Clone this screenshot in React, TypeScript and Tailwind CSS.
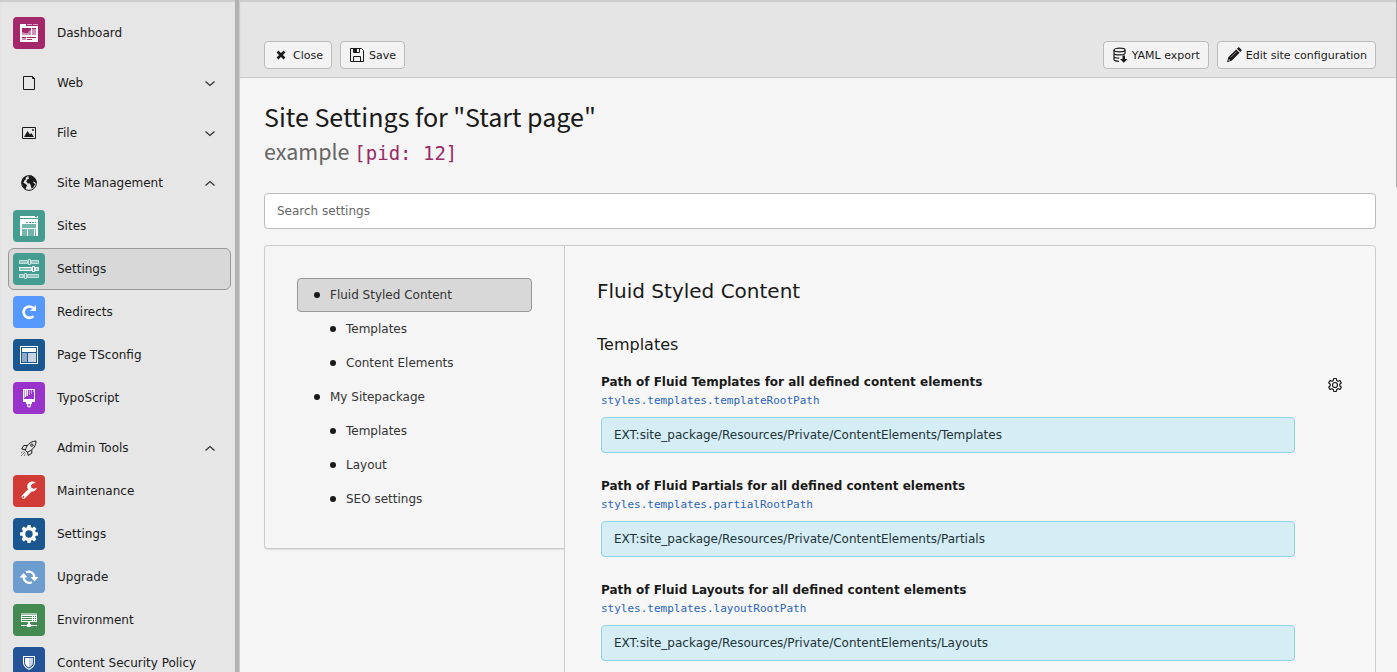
import type { ReactNode } from 'react';

const G = ({ children }: { children: ReactNode }) => (
  <svg viewBox="0 0 32 32" className="size-8" aria-hidden="true">{children}</svg>
);

const DashboardIcon = () => (
  <G>
    <path fill="#fff" d="M7 7h6v2h12v16H7z" />
    <path fill="#d9a0c2" d="M14 7h5v1h-5zM20 7h5v1h-5z" />
    <path fill="#d08fb8" d="M9 11h9v7H9zM19 11h4v7h-4zM9 20h4v3H9z" />
    <path fill="#a4276a" d="M9 11h9v2l-2 1-1 2h-3l-3-1zM19 11h4v1h-4zM9 20h4v1H9zM14 20h9v1h-9zM14 22h5v1h-5z" />
  </G>
);
const SitesIcon = () => (
  <G>
    <path fill="#fff" d="M7 6h18v2H7zM7 9h18v17H7z" />
    <path fill="#459c91" d="M22 6h2v1h-2zM9 12h14v1H9z" />
    <path fill="#fff" d="M9 12h4v1H9zM15 12h1v1h-1zM18 12h1v1h-1zM21 12h1v1h-1z" />
    <path fill="#74b5ad" d="M9 14h14v4H9zM9 19h5v7H9zM15 19h6v7h-6zM22 19h1v7h-1z" />
  </G>
);
const SlidersIcon = () => (
  <G>
    <g fill="#8fc4bd" stroke="#c7e1de">
      <path d="M6.500 7.500h8v3h-8zM18.500 7.500h7v3h-7z" />
      <path d="M6.500 21.500h4v3h-4zM14.500 21.500h11v3h-11z" />
    </g>
    <path fill="#8fc4bd" stroke="#fff" d="M6.500 14.500h12v3h-12zM22.500 14.500h3v3h-3z" />
    <g fill="#459c91" stroke="#c7e1de">
      <path d="M15.500 6.500h2v5h-2zM11.500 20.500h2v5h-2z" />
      <path stroke="#fff" d="M19.500 13.500h2v5h-2z" />
    </g>
  </G>
);
const RedirectIcon = () => (
  <G>
    <path fill="none" stroke="#fff" strokeWidth="2.600" d="M20.400 20.100a5.700 5.700 0 1 1-.4-8.300" />
    <path fill="#fff" d="M23 9v6h-6z" />
  </G>
);
const PageConfigIcon = () => (
  <G>
    <path fill="#fff" d="M7 7h18v18H7z" />
    <path fill="#1a568f" d="M8 8h16v16H8z" />
    <path fill="#fff" d="M9 9h14v4H9z" />
    <path fill="#8daac8" d="M9 14h5v9H9z" />
    <path fill="#c6d5e4" d="M15 14h8v9h-8z" />
  </G>
);
const TypoScriptIcon = () => (
  <G>
    <path fill="#fff" d="M10 7h12v13h-3v2h-1v1.500a2 2 0 0 1-4 0V22h-1v-2h-3z" />
    <path fill="#9933cc" d="M11 8h10v9H11z" />
    <path fill="#fff" d="M12 8h1v7h-1zM14 8h1v6h-1z" />
    <path fill="#cc99e6" d="M11 8h1v8h-1zM13 8h1v6h-1zM16 8h1v5h-1zM18 8h1v4h-1zM20 8h1v2h-1z" />
    <circle cx="16" cy="23" r="1" fill="#9933cc" />
  </G>
);
const WrenchIcon = () => (
  <G>
    <path fill="none" stroke="#fff" strokeWidth="4" strokeLinecap="round" d="M10.500 21.700l7-6.800" />
    <path fill="#fff" d="M22.700 7.900a5 5 0 1 0 1.300 4.800l-3 1-2.500-.7-.6-2.500 1.800-2z" />
    <circle cx="10.300" cy="21.900" r=".9" fill="#d13d36" />
  </G>
);
const cogTeeth = [0, 45, 90, 135, 180, 225, 270, 315];
const CogIcon = () => (
  <G>
    <circle cx="16" cy="16" r="5.300" fill="none" stroke="#fff" strokeWidth="3.200" />
    {cogTeeth.map((a) => (
      <path key={a} fill="#fff" d="M14 10l.5-3h3l.5 3z" transform={`rotate(${a} 16 16)`} />
    ))}
  </G>
);
const UpgradeIcon = () => (
  <G>
    <g fill="none" stroke="#fff" strokeWidth="2.200">
      <path d="M10.600 16a5.800 5.800 0 0 0 8.400 5.200" />
      <path d="M21.400 16.500a5.800 5.800 0 0 0-8.400-5.200" />
    </g>
    <path fill="#fff" d="M6.500 16.500l4-4.500 4 4.500zM17.500 16l4 4.500 4-4.500z" />
  </G>
);
const EnvironmentIcon = () => (
  <G>
    <path fill="#a1c5a9" d="M8 9h16v2H8z" />
    <path fill="#fff" d="M8 11h16v7H8zM15 18h2v2h1v1h6v1h-6v1h-4v-1H8v-1h6v-1h1z" />
    <path fill="#448a53" d="M9 12h10v1H9zM9 14h10v1H9zM9 16h10v1H9zM20 12h1v1h-1zM22 12h1v1h-1zM20 14h1v1h-1zM22 14h1v1h-1zM20 16h1v1h-1zM22 16h1v1h-1z" />
  </G>
);
const ShieldIcon = () => (
  <G>
    <path fill="#fff" d="M10 9h12v6.500c0 3.500-2.500 5.500-6 7.500-3.500-2-6-4-6-7.500z" />
    <path fill="#235498" d="M11 10h10v5.500c0 2.800-2 4.600-5 6.300-3-1.700-5-3.500-5-6.300z" />
    <path fill="#fff" d="M12 11h4v9.600c-2.500-1.500-4-3-4-5.100z" />
    <path fill="#c8d4e5" d="M16 11h4v4.500c0 2.100-1.500 3.600-4 5.100z" />
  </G>
);
const PageIcon = () => (
  <G>
    <path fill="none" stroke="#1a1a1a" d="M10.500 9.500h9l2 2v11h-11zM19.500 9.500v2h2" />
  </G>
);
const ImageIcon = () => (
  <G>
    <path fill="none" stroke="#1a1a1a" d="M9.500 10.500h13v11h-13z" />
    <path fill="#1a1a1a" d="M11 20l3.500-6 2.500 3.500 1.300-1.500L21 20z" />
    <path fill="#555" d="M19 12h2v2h-2z" />
  </G>
);
const GlobeIcon = () => (
  <G>
    <circle cx="16" cy="16" r="7.400" fill="none" stroke="#1a1a1a" />
    <path
      fill="#1a1a1a"
      d="M15.500 9l3-.5 3.500 2.500 1.800 4-1.300 1-1.500-1.500-1 .5 1.500 1.700.8.300-2.300 4-1.500.5-.7-3-1-2-2.300-.3-1.200-1.700 1-2 1.700-.9-.4-1zM9 13.500l1-2.500 3.500-2.300.7.800-1.700 1.500.5 1-2 2-.5 2 2 .8 1.500 1.500-1 2.500-.5 2.200C10 21 8.500 18 9 13.500z"
    />
  </G>
);
const RocketIcon = () => (
  <G>
    <g fill="none" stroke="#1a1a1a" strokeLinejoin="round">
      <path d="M12.300 18.300c1-4.300 4-8.800 10.700-9.300-.2 6.500-4.500 9.500-8.700 11.200z" />
      <path d="M14.500 13.500h-3.800l-2 3.500 3.600.8M18.800 17.800v3.400l-3.600 2.300-.7-3.500" />
      <circle cx="18.800" cy="13.200" r="1.200" />
      <path strokeDasharray="1 1" d="M8.500 23.500l3.500-3.500M8.500 20.500l2-1M11.500 23.500l1-2" />
    </g>
  </G>
);

type Item = { label: string; icon: ReactNode; tile?: string; active?: boolean };
type Group = { head: Item; open?: boolean; single?: boolean; items: Item[] };

const groups: Group[] = [
  { head: { label: 'Dashboard', icon: <DashboardIcon />, tile: 'bg-[#a4276a]' }, single: true, items: [] },
  { head: { label: 'Web', icon: <PageIcon /> }, items: [] },
  { head: { label: 'File', icon: <ImageIcon /> }, items: [] },
  {
    head: { label: 'Site Management', icon: <GlobeIcon /> },
    open: true,
    items: [
      { label: 'Sites', icon: <SitesIcon />, tile: 'bg-[#459c91]' },
      { label: 'Settings', icon: <SlidersIcon />, tile: 'bg-[#459c91]', active: true },
      { label: 'Redirects', icon: <RedirectIcon />, tile: 'bg-[#5599ff]' },
      { label: 'Page TSconfig', icon: <PageConfigIcon />, tile: 'bg-[#1a568f]' },
      { label: 'TypoScript', icon: <TypoScriptIcon />, tile: 'bg-[#9933cc]' },
    ],
  },
  {
    head: { label: 'Admin Tools', icon: <RocketIcon /> },
    open: true,
    items: [
      { label: 'Maintenance', icon: <WrenchIcon />, tile: 'bg-[#d13d36]' },
      { label: 'Settings', icon: <CogIcon />, tile: 'bg-[#1a568f]' },
      { label: 'Upgrade', icon: <UpgradeIcon />, tile: 'bg-[#6d9dcf]' },
      { label: 'Environment', icon: <EnvironmentIcon />, tile: 'bg-[#448a53]' },
      { label: 'Content Security Policy', icon: <ShieldIcon />, tile: 'bg-[#235498]' },
    ],
  },
];

function MenuRow({ item, chevron }: { item: Item; chevron?: 'up' | 'down' }) {
  return (
    <button
      type="button"
      className={`flex h-[42px] w-full shrink-0 items-center gap-3 rounded-md border px-1 text-left ${
        item.active ? 'border-[#979797] bg-[#d8d8d8]' : 'border-transparent'
      }`}
    >
      <span className={`size-8 shrink-0 overflow-hidden rounded ${item.tile ?? ''}`}>{item.icon}</span>
      <span className="grow whitespace-nowrap">{item.label}</span>
      {chevron && (
        <svg viewBox="0 0 16 16" className="mr-2 size-4" fill="none" stroke="#333" strokeWidth="1.300" aria-hidden="true">
          <path d={chevron === 'down' ? 'M3.500 6.500L8 10.500l4.500-4' : 'M3.500 10.500L8 6.500l4.500 4'} />
        </svg>
      )}
    </button>
  );
}

const CloseIcon = () => (
  <svg viewBox="0 0 16 16" className="size-4" aria-hidden="true">
    <path stroke="#1a1a1a" strokeWidth="2.600" d="M4.500 4.500l7 7M11.500 4.500l-7 7" />
  </svg>
);
const SaveIcon = () => (
  <svg viewBox="0 0 16 16" className="size-4" aria-hidden="true">
    <path fill="none" stroke="#1a1a1a" d="M1.500 1.500h11l2 2v11h-13zM4.500 14.500v-5h7v5M4.500 1.500v4h6v-4" />
    <path fill="#1a1a1a" d="M5 2h3v3H5z" />
  </svg>
);
const ExportIcon = () => (
  <svg viewBox="0 0 16 16" className="size-4" aria-hidden="true">
    <g fill="none" stroke="#1a1a1a" strokeWidth="1.200">
      <ellipse cx="7.500" cy="3" rx="5.500" ry="1.800" />
      <path d="M2 3v9.500c0 1 2 1.700 5 1.900M13 3v4M2 6.200c0 1 2.500 1.700 5.500 1.700 2 0 4.500-.4 5.300-1M2 9.400c0 1 2 1.600 5.200 1.700" />
    </g>
    <path fill="#1a1a1a" d="M10.500 8.500h2.500V12h2.500L11.800 15.700 8 12h2.500z" />
  </svg>
);
const PencilIcon = () => (
  <svg viewBox="0 0 16 16" className="size-4" aria-hidden="true">
    <path fill="#1a1a1a" d="M10.200 2.400l3.400 3.400-8 8L1 15.200l1.300-4.900zM10.900 1.700l1.300-1.200c.3-.3.800-.3 1.100 0l2.200 2.200c.3.300.3.800 0 1.100l-1.200 1.300z" />
    <path stroke="#f3f3f3" strokeWidth=".5" d="M4.700 10.500l5.800-5.800" />
    <path fill="#f3f3f3" d="M2.900 12.100l1.200 1.200-1.700.6z" />
  </svg>
);
const GearIcon = () => (
  <svg viewBox="0 0 16 16" className="size-4" fill="none" stroke="#1a1a1a" strokeWidth="1.200" aria-hidden="true">
    <circle cx="8" cy="8" r="2.500" />
    <path
      strokeLinejoin="round"
      d="M6.700 1.500h2.600l.4 2 1.300.8 2-.7 1.300 2.200-1.500 1.400v1.600l1.500 1.400-1.300 2.200-2-.7-1.300.8-.4 2H6.700l-.4-2-1.300-.8-2 .7-1.300-2.200 1.500-1.400V7.200L1.700 5.800 3 3.600l2 .7 1.300-.8z"
    />
  </svg>
);

function ToolButton({ icon, label }: { icon: ReactNode; label: string }) {
  return (
    <button
      type="button"
      className="flex h-7 items-center gap-1 rounded border border-[#bbb] bg-[#f3f3f3] px-2 text-[11px] whitespace-nowrap"
    >
      {icon}
      <span className="pt-0.5">{label}</span>
    </button>
  );
}

const tree = [
  { label: 'Fluid Styled Content', active: true },
  { label: 'Templates', child: true },
  { label: 'Content Elements', child: true },
  { label: 'My Sitepackage' },
  { label: 'Templates', child: true },
  { label: 'Layout', child: true },
  { label: 'SEO settings', child: true },
];

const fields = [
  { name: 'Templates', key: 'styles.templates.templateRootPath' },
  { name: 'Partials', key: 'styles.templates.partialRootPath' },
  { name: 'Layouts', key: 'styles.templates.layoutRootPath' },
];

export default function App() {
  return (
    <div className="flex h-screen overflow-hidden bg-[#f5f5f5] font-['Verdana','DejaVu_Sans',sans-serif] text-xs text-[#1a1a1a]">
      <nav aria-label="Modules" className="flex w-[239px] shrink-0 flex-col gap-[7px] overflow-hidden border-r-4 border-[#b2b2b2] bg-[#e6e6e6] pt-3 pr-1 pl-2 shadow-[inset_0_2px_1px_#ccc]">
        {groups.map((g) => (
          <div key={g.head.label} className="flex shrink-0 flex-col gap-px pb-px">
            <MenuRow item={g.head} chevron={g.single ? undefined : g.open ? 'up' : 'down'} />
            {g.items.map((i) => (
              <MenuRow key={i.label} item={i} />
            ))}
          </div>
        ))}
      </nav>

      <div className="relative min-w-0 grow border-l border-[#ccc]">
        <header className="flex items-center gap-2 border-b border-[#c9c9c9] bg-[#e5e5e5] pt-[41px] pr-[21px] pb-2 pl-6 shadow-[inset_0_2px_1px_#ccc]">
          <ToolButton icon={<CloseIcon />} label="Close" />
          <ToolButton icon={<SaveIcon />} label="Save" />
          <span className="grow" />
          <ToolButton icon={<ExportIcon />} label="YAML export" />
          <ToolButton icon={<PencilIcon />} label="Edit site configuration" />
        </header>

        <main className="pt-6 pr-[21px] pl-6">
          <h1 className="font-['Source_Sans_3','Noto_Sans_CJK_JP',sans-serif] text-[28px] leading-8">
            Site Settings for "Start page"
          </h1>
          <p className="mt-[3px] font-['Source_Sans_3','Noto_Sans_CJK_JP',sans-serif] text-2xl leading-8 text-[#666]">
            example <code className="font-['DejaVu_Sans_Mono',monospace] text-[19px] text-[#9a2a66]">[pid: 12]</code>
          </p>

          <input
            type="search"
            aria-label="Search settings"
            placeholder="Search settings"
            className="mt-6 block h-9 w-full rounded border border-[#bbb] bg-white px-3 placeholder:text-[#666]"
          />

          <div className="mt-4 flex items-start">
            <nav aria-label="Categories" className="w-[300px] shrink-0 rounded-l-sm border border-r-0 border-[#ccc] p-8 shadow-[0_1px_1px_#ddd]">
              <ul>
                {tree.map((t, n) => (
                  <li key={n}>
                    <a
                      href="#"
                      className={`flex h-[34px] items-center gap-2.5 rounded-sm border text-[#333] ${
                        t.active ? 'border-[#979797] bg-[#d8d8d8]' : 'border-transparent'
                      } ${t.child ? 'pl-8' : 'pl-4'}`}
                    >
                      <span className="size-1.5 rounded-full bg-[#1a1a1a]" />
                      <span>{t.label}</span>
                    </a>
                  </li>
                ))}
              </ul>
            </nav>

            <section className="min-w-0 grow rounded-tr border border-[#ccc] bg-[#f7f7f7] px-8 pt-[33px] pb-8">
              <h2 className="text-xl leading-6">Fluid Styled Content</h2>
              <h3 className="mt-[30px] text-base leading-6">Templates</h3>
              <div className="mt-4 flex flex-col gap-6">
                {fields.map((f, n) => (
                  <div key={f.key} className="flex items-start gap-8 pl-1">
                    <div className="min-w-0 grow">
                      <label htmlFor={f.key} className="block leading-[19px] font-bold">
                        Path of Fluid {f.name} for all defined content elements
                      </label>
                      <code className="block font-['DejaVu_Sans_Mono',monospace] text-[11px] leading-[18px] text-[#2864b8]">
                        {f.key}
                      </code>
                      <input
                        id={f.key}
                        defaultValue={`EXT:site_package/Resources/Private/ContentElements/${f.name}`}
                        className="mt-[7px] block h-9 w-full rounded border border-[#92d3e6] bg-[#d5edf4] px-3 text-[#1d3339]"
                      />
                    </div>
                    {n === 0 ? (
                      <button type="button" aria-label="Setting options" className="mt-1">
                        <GearIcon />
                      </button>
                    ) : (
                      <span className="w-4 shrink-0" />
                    )}
                  </div>
                ))}
              </div>
            </section>
          </div>
        </main>
        <div className="absolute top-0 right-0 h-[187px] w-px bg-[#aaa]" />
      </div>
    </div>
  );
}
